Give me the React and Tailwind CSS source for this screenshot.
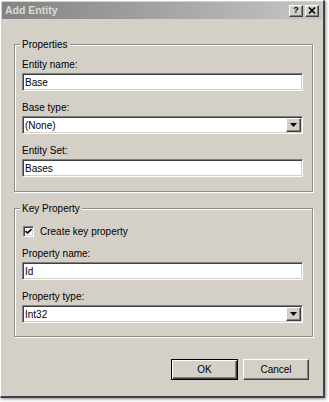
import React from 'react';

const sunken =
  'border border-t-[#808080] border-l-[#808080] border-r-white border-b-white shadow-[inset_1px_1px_0_#404040,inset_-1px_-1px_0_#d4d0c8]';
const raised =
  'border border-t-white border-l-white border-r-[#404040] border-b-[#404040] shadow-[inset_-1px_-1px_0_#808080,inset_1px_1px_0_#d4d0c8]';

function TextField({ label, value }) {
  return (
    <div className="flex flex-col">
      <span className="leading-[13px]">{label}</span>
      <div className={`mt-[2px] flex h-[18px] items-center bg-white pl-[2px] ${sunken}`}>
        <span className="leading-[13px]">{value}</span>
      </div>
    </div>
  );
}

function ComboField({ label, value }) {
  return (
    <div className="flex flex-col">
      <span className="leading-[13px]">{label}</span>
      <div className={`mt-[2px] flex h-[18px] items-center bg-white pl-[2px] pr-[1px] ${sunken}`}>
        <span className="flex-1 leading-[13px]">{value}</span>
        <div className={`flex h-[14px] w-[15px] items-center justify-center bg-[#d4d0c8] ${raised}`}>
          <svg width="7" height="4" viewBox="0 0 7 4">
            <path d="M0 0h7L3.5 4z" fill="#000" />
          </svg>
        </div>
      </div>
    </div>
  );
}

function GroupBox({ title, className = '', children }) {
  return (
    <fieldset
      className={`border border-[#8e8e8e] pl-[7px] pr-[9px] shadow-[inset_1px_1px_0_#fff,1px_1px_0_#fff] ${className}`}
    >
      <legend className="-ml-[2px] bg-[#d4d0c8] px-[2px] leading-[13px]">{title}</legend>
      {children}
    </fieldset>
  );
}

export default function App() {
  return (
    <div className="h-[402px] w-[329px] bg-white font-['Liberation_Sans',Arial,sans-serif] text-[10px] text-black">
      <div className="flex h-[398px] w-[325px] flex-col border-b-2 border-l border-r-2 border-t border-b-[#404040] border-l-white border-r-[#404040] border-t-white bg-[#d4d0c8] shadow-[1px_1px_3px_rgba(0,0,0,0.45)]">
        <div className="mx-[1px] mt-[1px] flex h-[17px] items-center bg-gradient-to-r from-[#838383] to-[#c6c6c6] pl-[3px] pr-[3px]">
          <span className="flex-1 text-[10.5px] font-bold leading-[13px] text-[#dedad2]">Add Entity</span>
          <div className={`flex h-[12px] w-[14px] items-center justify-center bg-[#d4d0c8] ${raised}`}>
            <span className="text-[9px] font-bold leading-[9px]">?</span>
          </div>
          <div className={`ml-[2px] flex h-[12px] w-[14px] items-center justify-center bg-[#d4d0c8] ${raised}`}>
            <svg width="8" height="7" viewBox="0 0 8 7">
              <path d="M1 0.5l6 6M7 0.5l-6 6" stroke="#000" strokeWidth="1.6" />
            </svg>
          </div>
        </div>

        <div className="flex flex-col pl-[13px] pr-[10px] pt-[19px]">
          <GroupBox title="Properties" className="pb-[14px] pt-[7px]">
            <div className="flex flex-col gap-[10px]">
              <TextField label="Entity name:" value="Base" />
              <ComboField label="Base type:" value="(None)" />
              <TextField label="Entity Set:" value="Bases" />
            </div>
          </GroupBox>

          <GroupBox title="Key Property" className="mt-[10px] pb-[13px] pt-[10px]">
            <div className="flex items-center pl-[1px]">
              <div className={`flex h-[11px] w-[11px] items-center justify-center bg-white ${sunken}`}>
                <svg width="7" height="7" viewBox="0 0 7 7">
                  <path d="M0.5 3l2 2 4-4" stroke="#000" strokeWidth="1.6" fill="none" />
                </svg>
              </div>
              <span className="ml-[6px] leading-[13px]">Create key property</span>
            </div>
            <div className="mt-[9px] flex flex-col gap-[10px]">
              <TextField label="Property name:" value="Id" />
              <ComboField label="Property type:" value="Int32" />
            </div>
          </GroupBox>

          <div className="mr-[4px] mt-[22px] flex justify-end gap-[5px]">
            <button className="flex h-[21px] w-[67px] items-center justify-center border border-black bg-[#d4d0c8] shadow-[inset_1px_1px_0_#fff,inset_-1px_-1px_0_#404040,inset_-2px_-2px_0_#808080]">
              OK
            </button>
            <button className={`flex h-[21px] w-[66px] items-center justify-center bg-[#d4d0c8] ${raised}`}>
              Cancel
            </button>
          </div>
        </div>
      </div>
    </div>
  );
}
